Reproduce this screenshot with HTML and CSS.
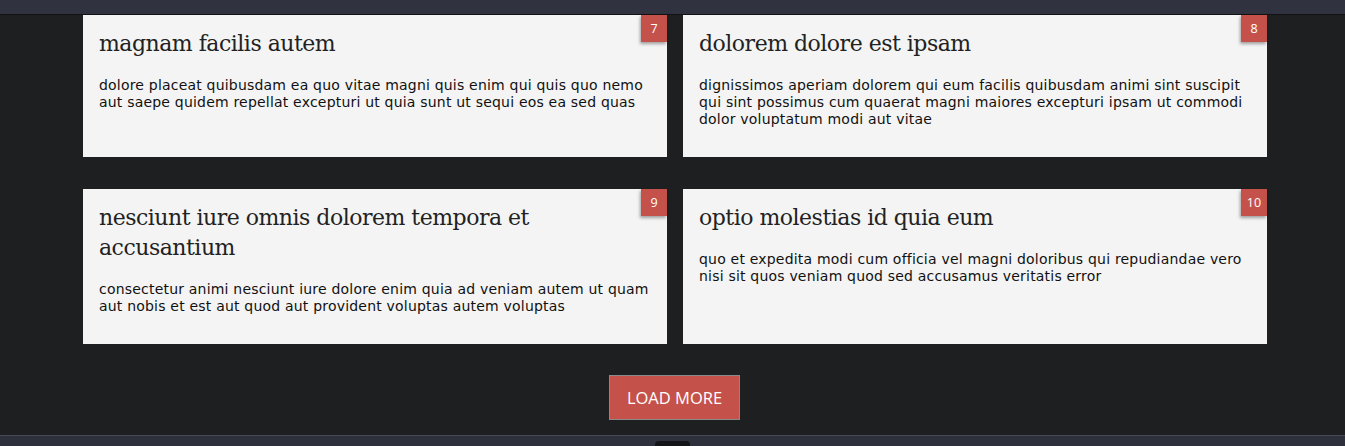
FILE: index.html
```html
<!DOCTYPE html>
<html>
<head>
<meta charset="utf-8">
<link rel="stylesheet" href="styles.css">
</head>
<body>
<header class="topbar"></header>
<main class="content">
  <div class="grid">
    <article class="card">
      <span class="badge">7</span>
      <h2 class="card-title">magnam facilis autem</h2>
      <p class="card-text">dolore placeat quibusdam ea quo vitae magni quis enim qui quis quo nemo aut saepe quidem repellat excepturi ut quia sunt ut sequi eos ea sed quas</p>
    </article>
    <article class="card">
      <span class="badge">8</span>
      <h2 class="card-title">dolorem dolore est ipsam</h2>
      <p class="card-text">dignissimos aperiam dolorem qui eum facilis quibusdam animi sint suscipit qui sint possimus cum quaerat magni maiores excepturi ipsam ut commodi dolor voluptatum modi aut vitae</p>
    </article>
    <article class="card">
      <span class="badge">9</span>
      <h2 class="card-title">nesciunt iure omnis dolorem tempora et accusantium</h2>
      <p class="card-text">consectetur animi nesciunt iure dolore enim quia ad veniam autem ut quam aut nobis et est aut quod aut provident voluptas autem voluptas</p>
    </article>
    <article class="card">
      <span class="badge">10</span>
      <h2 class="card-title">optio molestias id quia eum</h2>
      <p class="card-text">quo et expedita modi cum officia vel magni doloribus qui repudiandae vero nisi sit quos veniam quod sed accusamus veritatis error</p>
    </article>
  </div>
  <div class="actions">
    <button class="load-more">LOAD MORE</button>
  </div>
</main>
<footer class="bottombar"><span class="tab"></span></footer>
</body>
</html>
```

FILE: styles.css
```css
html, body {
  margin: 0;
  padding: 0;
  background: #1e1f21;
  height: 446px;
  overflow: hidden;
}
.topbar {
  height: 14px;
  background: #30323f;
  border-bottom: 1px solid #111215;
}
.content {
  padding: 0 78px 0 83px;
}
.grid {
  display: grid;
  grid-template-columns: 584px 584px;
  column-gap: 16px;
  row-gap: 32px;
}
.card {
  position: relative;
  background: #f4f4f4;
  padding: 14px 16px 13px 16px;
}
.badge {
  position: absolute;
  top: 0;
  right: 0;
  min-width: 26px;
  height: 27px;
  padding: 0 4px;
  box-sizing: border-box;
  background: #c5524a;
  color: #fff;
  font-family: "Open Sans", sans-serif;
  font-size: 12.5px;
  line-height: 27px;
  text-align: center;
  box-shadow: -1px 2px 3px rgba(0,0,0,0.35);
}
.card-title {
  margin: 0 0 18px 0;
  font-family: "DejaVu Serif", serif;
  font-weight: normal;
  font-size: 22px;
  line-height: 30px;
  color: #222;
  letter-spacing: -0.5px;
}
.card-text {
  margin: 0 0 16px 0;
  font-family: "DejaVu Sans", sans-serif;
  font-size: 14px;
  letter-spacing: 0.2px;
  line-height: 17px;
  color: #111;
}
.actions {
  display: flex;
  justify-content: center;
  padding: 31px 1px 15px 0;
}
.load-more {
  width: 131px;
  height: 45px;
  background: #c5524a;
  border: 1px solid #8a8a8a;
  color: #fff;
  font-family: "Open Sans", sans-serif;
  font-size: 16.5px;
  padding: 0;
}
.bottombar {
  position: relative;
  height: 11px;
  background: #2e303c;
  border-top: 1px solid #474956;
  display: flex;
  justify-content: center;
}
.tab {
  margin-top: 5px;
  width: 35px;
  height: 10px;
  background: #131417;
  border-radius: 4px 4px 0 0;
}
```
